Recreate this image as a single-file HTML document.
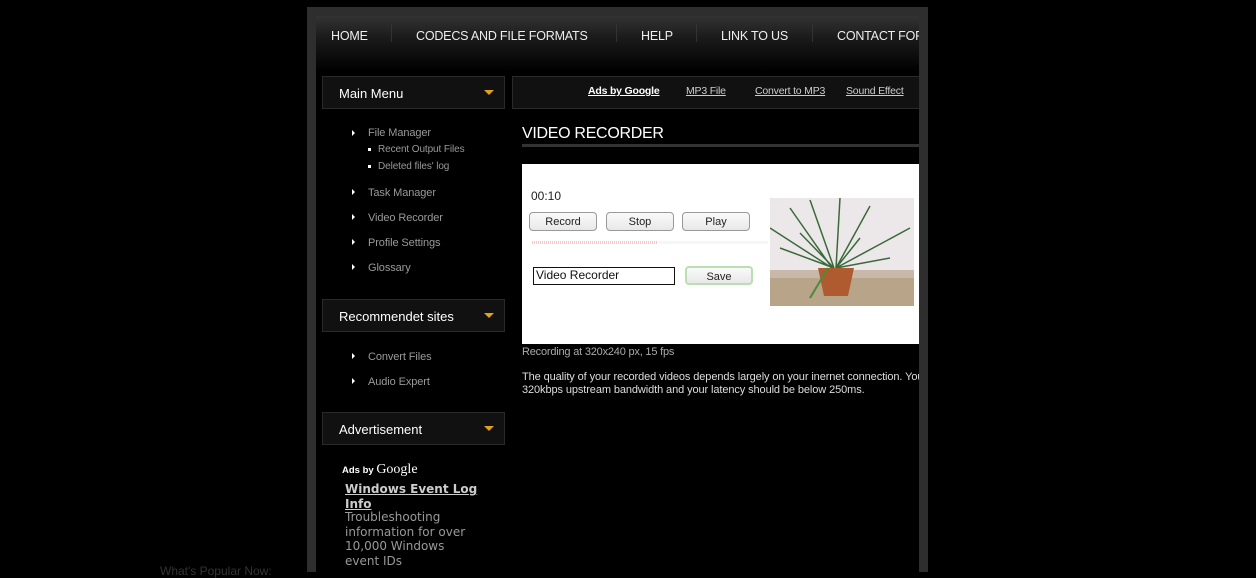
<!DOCTYPE html>
<html><head><meta charset="utf-8"><style>
*{margin:0;padding:0;box-sizing:border-box}
body{width:1256px;height:572px;background:#000;overflow:hidden;position:relative;font-family:"Liberation Sans",Arial,sans-serif}
.a{position:absolute;white-space:nowrap}
.nav{color:#eee;font-size:12.5px;top:29px;letter-spacing:-0.2px}
.sep{position:absolute;top:24px;width:1px;height:18px;background:#333}
.box{position:absolute;background:#111;border:1px solid #2a2a2a;color:#fff;font-size:13px}
.tri{position:absolute;width:0;height:0;border-left:5px solid transparent;border-right:5px solid transparent;border-top:5px solid #e0a020}
.mi{color:#999;font-size:11px;letter-spacing:-0.1px}
.ar{position:absolute;width:0;height:0;border-top:3px solid transparent;border-bottom:3px solid transparent;border-left:3px solid #fff}
.dot{position:absolute;width:3px;height:3px;background:#fff}
.btn{position:absolute;height:19px;border:1px solid #999;border-radius:4px;background:linear-gradient(#fafafa,#e8e8e8);font-size:11px;color:#222;text-align:center;line-height:17px}
.lk{color:#ccc;font-size:10.5px;text-decoration:underline;top:85px;letter-spacing:-0.2px}
</style></head><body>
<div class="a" style="left:307px;top:7px;width:621px;height:565px;background:#2e2e2e"></div>
<div class="a" style="left:316px;top:16px;width:603px;height:556px;background:#000"></div>
<div class="a" style="left:316px;top:16px;width:603px;height:56px;background:linear-gradient(#333 0%,#1a1a1a 40%,#000 100%)"></div>
<div class="a nav" style="left:331px">HOME</div>
<div class="sep" style="left:391px"></div>
<div class="a nav" style="left:416px">CODECS AND FILE FORMATS</div>
<div class="sep" style="left:616px"></div>
<div class="a nav" style="left:641px">HELP</div>
<div class="sep" style="left:696px"></div>
<div class="a nav" style="left:721px">LINK TO US</div>
<div class="sep" style="left:812px"></div>
<div class="a nav" style="left:837px;width:82px;overflow:hidden">CONTACT FORM</div>

<div class="box" style="left:322px;top:76px;width:183px;height:33px"><span class="a" style="left:16px;top:9px">Main Menu</span><div class="tri" style="left:161px;top:13px"></div></div>
<div class="box" style="left:512px;top:76px;width:407px;height:33px;border-right:none"></div>
<div class="a lk" style="left:588px;color:#fff;font-weight:bold">Ads by Google</div>
<div class="a lk" style="left:686px">MP3 File</div>
<div class="a lk" style="left:755px">Convert to MP3</div>
<div class="a lk" style="left:846px">Sound Effect</div>

<div class="ar" style="left:352px;top:130px"></div><div class="a mi" style="left:368px;top:127px">File Manager</div>
<div class="dot" style="left:368px;top:148px"></div><div class="a mi" style="left:378px;top:144px;font-size:10px">Recent Output Files</div>
<div class="dot" style="left:368px;top:165px"></div><div class="a mi" style="left:378px;top:161px;font-size:10px">Deleted files' log</div>
<div class="ar" style="left:352px;top:189px"></div><div class="a mi" style="left:368px;top:187px">Task Manager</div>
<div class="ar" style="left:352px;top:214px"></div><div class="a mi" style="left:368px;top:212px">Video Recorder</div>
<div class="ar" style="left:352px;top:239px"></div><div class="a mi" style="left:368px;top:237px">Profile Settings</div>
<div class="ar" style="left:352px;top:264px"></div><div class="a mi" style="left:368px;top:262px">Glossary</div>

<div class="box" style="left:322px;top:299px;width:183px;height:33px"><span class="a" style="left:16px;top:9px">Recommendet sites</span><div class="tri" style="left:161px;top:13px"></div></div>
<div class="ar" style="left:352px;top:353px"></div><div class="a mi" style="left:368px;top:351px">Convert Files</div>
<div class="ar" style="left:352px;top:378px"></div><div class="a mi" style="left:368px;top:376px">Audio Expert</div>

<div class="box" style="left:322px;top:412px;width:183px;height:33px"><span class="a" style="left:16px;top:9px">Advertisement</span><div class="tri" style="left:161px;top:13px"></div></div>
<div class="a" style="left:342px;top:462px;color:#fff;font-size:9.5px;font-weight:bold">Ads by <span style="font-family:'Liberation Serif',serif;font-size:14px;font-weight:normal">Google</span></div>
<div class="a" style="left:345px;top:482px;color:#ccc;font-size:12px;font-weight:bold;text-decoration:underline;font-family:'DejaVu Sans',sans-serif;line-height:14.5px;white-space:normal;width:150px">Windows Event Log Info</div>
<div class="a" style="left:345px;top:510px;color:#999;font-size:12px;font-family:'DejaVu Sans',sans-serif;line-height:14.5px;white-space:normal;width:128px">Troubleshooting information for over 10,000 Windows event IDs</div>
<div class="a" style="left:160px;top:564px;color:#333;font-size:12px">What's Popular Now:</div>

<div class="a" style="left:522px;top:125px;color:#fff;font-size:16px;letter-spacing:-0.3px">VIDEO RECORDER</div>
<div class="a" style="left:522px;top:144px;width:397px;height:3px;background:#333"></div>
<div class="a" style="left:522px;top:164px;width:397px;height:180px;background:#fff"></div>
<div class="a" style="left:531px;top:189px;color:#222;font-size:12px">00:10</div>
<div class="btn" style="left:529px;top:212px;width:68px;line-height:19px">Record</div>
<div class="btn" style="left:606px;top:212px;width:68px;line-height:19px">Stop</div>
<div class="btn" style="left:682px;top:212px;width:68px;line-height:19px">Play</div>
<div class="a" style="left:532px;top:241px;width:126px;height:3px;background:repeating-linear-gradient(90deg,#f4c8c8 0 1px,#fff 1px 2px)"></div>
<div class="a" style="left:658px;top:241px;width:110px;height:3px;background:#f6f6f6"></div>
<div class="a" style="left:533px;top:267px;width:142px;height:18px;border:1px solid #111;font-size:12px;color:#111;padding-left:2px;line-height:15px">Video Recorder</div>
<div class="btn" style="left:685px;top:266px;width:68px;border:2px solid #b8e0b0;line-height:18px">Save</div>
<svg class="a" style="left:770px;top:198px" width="144" height="108" viewBox="0 0 144 108">
<rect width="144" height="108" fill="#ece8ea"/>
<rect x="0" y="80" width="144" height="28" fill="#b8a488"/>
<polygon points="0,72 144,72 144,80 0,80" fill="#c8b8a8"/>
<g stroke="#3a6a3a" stroke-width="1.5" fill="none">
<path d="M62,70 L20,10 M64,70 L40,2 M66,70 L70,0 M66,70 L100,8 M66,70 L140,30 M64,70 L10,50 M66,70 L120,60 M62,70 L0,30 M66,70 L90,40 M64,70 L30,35"/>
</g>
<path d="M48,70 L84,70 L78,98 L54,98Z" fill="#b05a30"/>
<path d="M58,70 L40,100" stroke="#4a8a3a" stroke-width="2"/>
</svg>
<div class="a" style="left:522px;top:346px;color:#aaa;font-size:11px;letter-spacing:-0.2px">Recording at 320x240 px, 15 fps</div>
<div class="a" style="left:522px;top:371px;color:#ddd;font-size:11px;line-height:13px;width:397px;overflow:hidden;letter-spacing:-0.1px">The quality of your recorded videos depends largely on your inernet connection. You need<br>320kbps upstream bandwidth and your latency should be below 250ms.</div>
</body></html>
